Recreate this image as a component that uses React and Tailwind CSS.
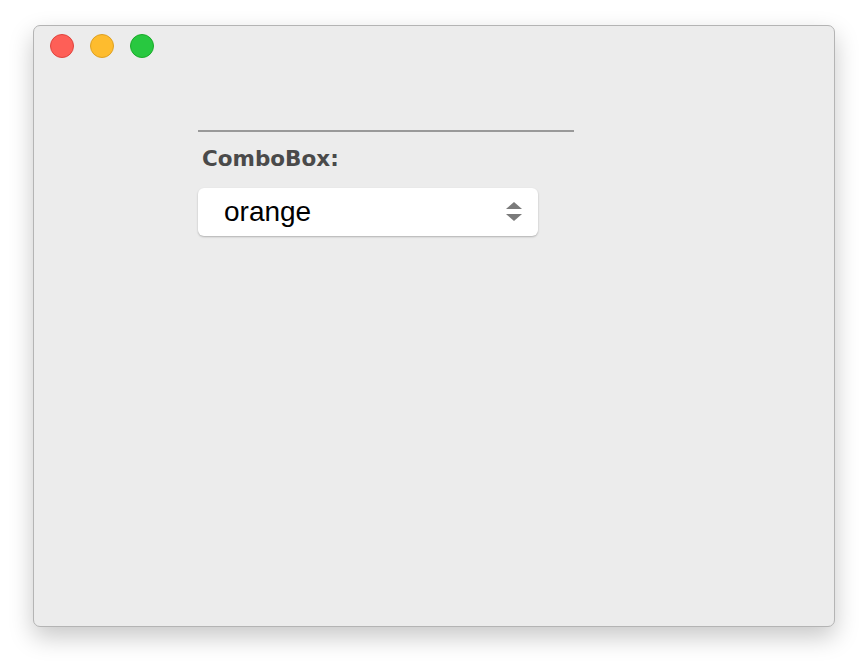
import React from "react";

const Light = ({ fill, ring }) => (
  <span
    className={`block w-[24px] h-[24px] rounded-full border ${fill} ${ring}`}
  />
);

const App = () => {
  return (
    <div className="w-[868px] h-[668px] bg-white pt-[25px] pl-[33px]">
      {/* Window */}
      <div className="w-[802px] h-[602px] rounded-[7px] border border-[#b4b4b4] bg-[#ececec] shadow-[0_10px_24px_rgba(0,0,0,0.22)] flex flex-col">
        {/* Title bar */}
        <div className="flex items-center gap-[16px] pl-[16px] pt-[6px] h-[34px]">
          <Light fill="bg-[#fe5f57]" ring="border-[#e0443e]" />
          <Light fill="bg-[#febc2e]" ring="border-[#dea123]" />
          <Light fill="bg-[#28c840]" ring="border-[#1aab29]" />
        </div>

        {/* Content */}
        <div className="pl-[164px] pt-[70px] flex flex-col">
          <div className="w-[376px] h-[2px] bg-[#999999]" />
          <div
            className="mt-[14px] ml-[4px] text-[21.5px] leading-[26px] font-bold text-[#4a4a4a]"
            style={{ fontFamily: '"DejaVu Sans", sans-serif' }}
          >
            ComboBox:
          </div>
          <div className="mt-[16px] w-[340px] h-[48px] rounded-[6px] bg-white shadow-[0_1px_2px_rgba(0,0,0,0.25)] flex items-center justify-between pl-[26px] pr-[16px]">
            <span
              className="text-[28px] text-black"
              style={{ fontFamily: '"Liberation Sans", Arial, sans-serif' }}
            >
              orange
            </span>
            <svg width="16" height="22" viewBox="0 0 16 22">
              <polygon points="8,1 16,8 0,8" fill="#7a7a7a" />
              <polygon points="0,13 16,13 8,20" fill="#7a7a7a" />
            </svg>
          </div>
        </div>
      </div>
    </div>
  );
};

export default App;
